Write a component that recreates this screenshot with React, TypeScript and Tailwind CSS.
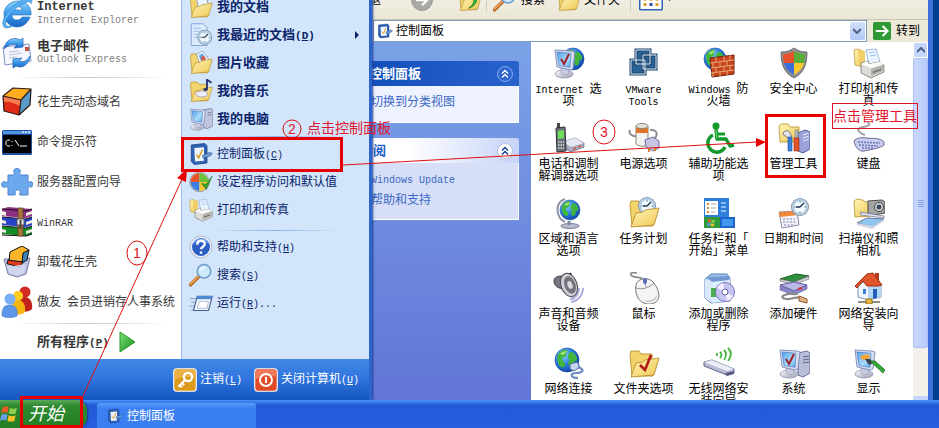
import React from 'react';

const MONO = "font-['Liberation_Mono','Noto_Sans_CJK_SC',monospace]";

// Latin runs are set in a narrower face so that they take half a CJK cell
const Mixed: React.FC<{ text: string; latin?: string }> = ({ text, latin = 'text-[10px]' }) => (
  <>
    {text.split(/([\x21-\x7e][\x20-\x7e]*)/).map((part, i) => {
      if (i % 2 === 0) return part;
      const key = part.match(/^\((\w)\)(.*)$/);
      return (
        <span key={i} className={`${MONO} ${latin}`}>
          {key ? <>(<u>{key[1]}</u>){key[2]}</> : part}
        </span>
      );
    })}
  </>
);

/* ---------- shared icon parts ---------- */

const Defs = () => (
  <svg width="0" height="0" className="absolute" aria-hidden="true">
    <defs>
      <radialGradient id="sea" cx="0.35" cy="0.3" r="0.8">
        <stop offset="0" stopColor="#8fd0ff" />
        <stop offset="0.5" stopColor="#2a7de0" />
        <stop offset="1" stopColor="#0b3c9c" />
      </radialGradient>
      <linearGradient id="screen" x1="0" y1="0" x2="1" y2="1">
        <stop offset="0" stopColor="#4f9fe8" />
        <stop offset="0.6" stopColor="#a9dcfa" />
        <stop offset="1" stopColor="#5ba6ea" />
      </linearGradient>
      <linearGradient id="folder" x1="0" y1="0" x2="1" y2="1">
        <stop offset="0" stopColor="#fff6b8" />
        <stop offset="1" stopColor="#f0c653" />
      </linearGradient>
      <linearGradient id="metal" x1="0" y1="0" x2="1" y2="1">
        <stop offset="0" stopColor="#ffffff" />
        <stop offset="1" stopColor="#9a9db4" />
      </linearGradient>
      <linearGradient id="blueGlass" x1="0" y1="0" x2="0" y2="1">
        <stop offset="0" stopColor="#8fd3fb" />
        <stop offset="0.5" stopColor="#3d9bea" />
        <stop offset="1" stopColor="#1762c4" />
      </linearGradient>
      <linearGradient id="play" x1="0" y1="0" x2="1" y2="1">
        <stop offset="0" stopColor="#7ee07a" />
        <stop offset="1" stopColor="#0d8a14" />
      </linearGradient>
    </defs>
  </svg>
);

const Icon: React.FC<{ className?: string; children: React.ReactNode }> = ({ className = 'size-8', children }) => (
  <svg viewBox="0 0 32 32" className={`${className} shrink-0`} aria-hidden="true">{children}</svg>
);

const Globe = ({ cx = 16, cy = 16, r = 12 }) => (
  <g transform={`translate(${cx} ${cy}) scale(${r / 12})`}>
    <circle r="12" fill="url(#sea)" stroke="#0d3f96" strokeWidth="0.6" />
    <path d="M-9-6c3-4 8-5 9-4s-2 3-1 5-4 2-4 4 3 2 3 5-2 4-4 3-5-7-3-13zM4-8c3 0 6 4 6 7s-2 1-3 3 0 5-3 5-3-4-2-6-2-3-1-5 1-4 3-4z" fill="#3fb53a" />
    <path d="M-7-6c3-3 6-3 7-3s-3 3-4 4z" fill="#a7e57c" />
  </g>
);

const Monitor = ({ children }: { children?: React.ReactNode }) => (
  <>
    <ellipse cx="11" cy="27" rx="9" ry="4" fill="url(#metal)" stroke="#8588a8" strokeWidth="0.7" />
    <path d="M8 20l7 1 1 5c-2 2-6 2-8 0z" fill="#c9cbe0" stroke="#8a8cab" strokeWidth="0.5" />
    <path d="M2 3l17 1 3 1-2 17-3 1L4 20z" fill="#d8dced" stroke="#6c7db0" strokeWidth="0.8" />
    <path d="M4 5l14 1.300-1 14L6 18.500z" fill="url(#screen)" stroke="#3c6fc0" strokeWidth="0.6" />
    {children}
  </>
);

const Folder = ({ children }: { children?: React.ReactNode }) => (
  <>
    <path d="M2 8l1-4h8l2 3h11l1 22H4z" fill="#f3d36c" stroke="#b8902f" strokeWidth="0.9" />
    {children}
    <path d="M3 30l5-14 7-1 2-2 14-2-5 17z" fill="url(#folder)" stroke="#b8902f" strokeWidth="0.9" />
  </>
);

const PrinterShape = () => (
  <>
    <path d="M13 3l10-1 4 13-11 3z" fill="#eaf4ff" stroke="#8fa7d2" strokeWidth="0.8" />
    <path d="M16 6l6-1M17 9l6-1" stroke="#9fc3ee" />
    <path d="M8 16l7-2 1 3 10-2 5 3v7l-13 6-10-5z" fill="#dcdcd8" stroke="#77776f" strokeWidth="0.8" />
    <path d="M8 17l10 4 13-4-5-2-10 2-2-3z" fill="#fbfbf8" />
    <path d="M18 22l12-4v6l-12 5z" fill="#b1b1ab" />
    <path d="M20 25l8-3v1l-8 3z" fill="#55554f" />
  </>
);

const PrintersShape = () => (
  <>
    <path d="M1 3l4-1 5 2v16l-8-2z" fill="url(#folder)" stroke="#b8902f" strokeWidth="0.7" />
    <path d="M5 3l7 1v14l-6 1z" fill="#f2cf66" />
    <PrinterShape />
  </>
);

const Clock = ({ cx = 19, cy = 11, r = 9 }) => (
  <g transform={`translate(${cx} ${cy}) scale(${r / 9})`}>
    <circle r="9" fill="#7e95ae" />
    <circle r="8" fill="#c5d8e8" />
    <circle r="6.500" fill="#f1fbff" stroke="#7cabca" strokeWidth="0.6" />
    <path d="M0 0l4-4M0 0h-4" stroke="#20304e" strokeWidth="1.400" />
    <path d="M0-6v1.500M0 6v-1.500M6 0h-1.500M-6 0h1.500" stroke="#5a7590" />
  </g>
);

const PanelIcon = ({ className = 'size-6' }) => (
  <Icon className={className}>
    <path d="M3 4l18-2 3 3v23l-17 2-4-4z" fill="#2f62b4" stroke="#163c7c" />
    <path d="M7 8l13-1v18L8 26z" fill="#eff6ff" />
    <path d="M10 17l3 4 5-11" fill="none" stroke="#d99a20" strokeWidth="2" />
    <path d="M18 18l9-4 4 1-2 3-10 4z" fill="#6f9bd8" stroke="#24508f" strokeWidth="0.8" />
  </Icon>
);

const Magnifier = ({ className = 'size-6' }) => (
  <Icon className={className}>
    <path d="M13 18L2 29" stroke="#b86a22" strokeWidth="5" strokeLinecap="round" />
    <path d="M12 18L2 28" stroke="#f0ae6a" strokeWidth="2" strokeLinecap="round" />
    <circle cx="20" cy="11" r="9" fill="#cdeafd" stroke="#6da0cc" strokeWidth="2.200" />
    <path d="M14 10c1-4 5-5 8-4-3 1-5 3-8 4z" fill="#fff" />
  </Icon>
);

const Flag = () => (
  <>
    <path d="M4 6c4-3 7-2 10-1l-2 9c-3-1-6-2-10 1z" fill="#ee5a26" />
    <path d="M16 6c4 2 7 2 11 0l-2 9c-4 2-7 1-11 0z" fill="#8fd04f" />
    <path d="M2 18c4-3 7-2 10-1l-2 9c-3-1-6-2-10 1z" fill="#6b9ff5" />
    <path d="M14 18c4 2 7 2 11 0l-2 9c-4 2-7 1-11 0z" fill="#fbc22c" />
  </>
);

/* ---------- start menu icons ---------- */

const IeIcon = () => (
  <Icon>
    <path d="M29 20h-8c-1 2-3 3-5 3-3 0-5-2-5-5h19c1-8-5-14-13-14S3 10 3 17s6 13 13 13c6 0 11-4 13-10zM11 13c1-2 3-4 5-4s5 2 5 4z" fill="url(#blueGlass)" stroke="#1d68bd" strokeWidth="0.6" />
    <path d="M3 30c-4-5 2-16 13-24C23 1 30-1 31 3c0 2-1 3-1 4 0-3-4-3-10 1C10 14 3 24 5 28c1 2 5 1 8 0-4 3-8 4-10 2z" fill="#55b0f3" stroke="#2474c8" strokeWidth="0.5" />
  </Icon>
);

const MailIcon = () => (
  <Icon>
    <path d="M2 10l26-3 2 17-26 4z" fill="#f4f7ff" stroke="#7e93c2" />
    <path d="M8 15l10-1M8 18l13-2M8 21l8-1" stroke="#b7bfd6" />
    <path d="M24 10h4v4h-4z" fill="#c5523e" />
    <path d="M3 12C4 3 13-1 19 3l3-2v9l-9 1 3-3c-4-2-9 0-13 4z" fill="url(#blueGlass)" stroke="#1b5cae" strokeWidth="0.7" />
    <path d="M29 19c-1 9-8 13-14 10l-3 2v-9l9-1-3 3c4 2 8 0 11-5z" fill="url(#blueGlass)" stroke="#1b5cae" strokeWidth="0.7" />
  </Icon>
);

const CubeIcon = () => (
  <Icon>
    <path d="M2 10l18 4-2 15L3 25z" fill="#e02b16" />
    <path d="M2 10l18 4-1 6C13 17 8 15 3 16z" fill="#f77a51" />
    <path d="M2 10L12 2l18 1-10 11z" fill="#ffac1f" />
    <path d="M20 14L30 3l-1 16-11 10z" fill="#5a9bc9" />
    <path d="M2 10l18 4-2 15L3 25zM2 10L12 2l18 1-10 11M30 3l-1 16-11 10" fill="none" stroke="#2a1a14" strokeWidth="1.200" strokeLinejoin="round" />
  </Icon>
);

const CmdIcon = () => (
  <Icon>
    <rect x="1" y="4" width="30" height="25" rx="1.500" fill="#1d4f9e" />
    <rect x="2" y="5" width="28" height="3" fill="#4f95e4" />
    <path d="M21 6h2M24 6h2M27 6h2" stroke="#dcecff" strokeWidth="1.500" />
    <rect x="2" y="9" width="28" height="18" fill="#000" />
    <path d="M9 14H6.500L5 15.500v3L6.500 20H9M11 15v1M11 19v1M14 14l4 6M19 20h7" fill="none" stroke="#fff" />
  </Icon>
);

const PuzzleIcon = () => (
  <Icon>
    <path d="M7 9h6c1-2-1-3 0-5s5-2 6 0-1 3 0 5h8v7c1 1 2-1 4 0s1 5-1 5-2-1-3 0v8h-8c-1-2 1-2 0-4s-5-1-5 1 1 2 0 3H7v-8c-2-1-3 1-5 0s-2-4 0-5 3 1 5 0z" fill="#6da7ee" stroke="#4d86cf" />
  </Icon>
);

const RarIcon = () => (
  <Icon>
    <path d="M1 3l6-2 24 2v7l-6 2-24-2z" fill="#8d3187" />
    <path d="M1 11l24 2 6-2v8l-6 2-24-2z" fill="#2643c8" />
    <path d="M1 20l24 2 6-2v8l-6 2-24-2z" fill="#168a28" />
    <path d="M1 5l4 1v4l-4-1zM1 14l4 1v3l-4-1zM1 23l4 1v3l-4-1zM25 7l6-2v3l-6 2zM25 16l6-2v3l-6 2zM25 25l6-2v3l-6 2z" fill="#f2ecdc" />
    <path d="M1 3l24 2 6-2M1 11l24 2 6-2M1 20l24 2 6-2M1 29l24 1 6-2" fill="none" stroke="#1b0f1a" strokeWidth="1.200" />
    <path d="M17 2h5v28h-5z" fill="#a8753c" stroke="#51361a" strokeWidth="0.7" />
    <path d="M16 13h7v6h-7z" fill="#eee" stroke="#555" />
    <path d="M19.500 14v9" stroke="#444" strokeWidth="2" />
  </Icon>
);

const UninstallIcon = () => (
  <Icon>
    <path d="M3 13l26-1-4 16-9 3-9-3z" fill="#b7bfdf" stroke="#7b83ad" />
    <path d="M9 6l12-6 7 4-6 12-14-1z" fill="#ffb52a" stroke="#111" />
    <path d="M22 7l6-3-2 10-5 3z" fill="#3f83b9" stroke="#111" />
    <path d="M7 14l15 2-3 5-13-3z" fill="#e23a1c" stroke="#111" />
    <path d="M5 18l7 2 13-2-2 9-7 3-8-3z" fill="#d3d8ee" opacity="0.900" />
  </Icon>
);

const PeopleIcon = () => (
  <Icon>
    <circle cx="24" cy="6" r="5.500" fill="#d22c22" />
    <path d="M18 24c-1-9 1-13 6-13s8 5 7 12c-3 3-9 4-13 1z" fill="#c2231b" />
    <circle cx="17" cy="10" r="5" fill="#ffcb1f" />
    <path d="M11 27c-1-9 1-13 6-13s8 5 7 12c-3 3-9 4-13 1z" fill="#f5b60d" />
    <circle cx="9" cy="13" r="5.500" fill="#77aef5" />
    <path d="M1 30c0-8 2-11 8-11s8 5 7 11c-4 2-11 2-15 0z" fill="#5d97ea" stroke="#3f78cc" strokeWidth="0.6" />
  </Icon>
);

const DocsIcon = () => <Icon className="size-6"><Folder><path d="M10 5l12-3 5 13-14 5z" fill="#e8f4ff" stroke="#88a" /></Folder></Icon>;
const RecentIcon = () => (
  <Icon className="size-6">
    <path d="M3 1h16l5 5v24H3z" fill="#dcebff" stroke="#6f8fc4" />
    <path d="M6 7h10M6 11h8M6 15h6M6 19h6" stroke="#8eabdc" />
    <Clock cx={21} cy={19} r={10} />
  </Icon>
);
const PicturesIcon = () => (
  <Icon className="size-6">
    <Folder>
      <path d="M10 5l8-5 9 12-12 6z" fill="#fff" stroke="#7d8db8" />
      <path d="M13 6l5-3 5 8-7 3z" fill="#58a8e8" />
      <circle cx="19" cy="10" r="3" fill="#e05a3a" />
    </Folder>
  </Icon>
);
const MusicIcon = () => (
  <Icon className="size-6">
    <Folder />
    <ellipse cx="17" cy="20" rx="8" ry="4" fill="#eef" stroke="#99a" />
    <path d="M24 14V1l6 4" fill="none" stroke="#27336e" strokeWidth="2.500" />
    <ellipse cx="22" cy="14" rx="3" ry="2" fill="#27336e" />
  </Icon>
);
const ComputerIcon = () => (
  <Icon className="size-6">
    <path d="M19 4l10-2 3 2v21l-8 4-5-2z" fill="#c0c5de" stroke="#6f769e" />
    <path d="M25 8l5-1M25 11l5-1" stroke="#5c6590" />
    <Monitor />
  </Icon>
);
const DefaultsIcon = () => (
  <Icon className="size-6">
    <circle cx="14" cy="16" r="13" fill="#d8d8d8" stroke="#888" />
    <path d="M14 16V4A12 12 0 0 0 2 16z" fill="#e8532c" />
    <path d="M14 16V4a12 12 0 0 1 12 12z" fill="#6cc13a" />
    <path d="M14 16H2a12 12 0 0 0 12 12z" fill="#3c7fe0" />
    <path d="M14 16h12a12 12 0 0 1-12 12z" fill="#f7c52f" />
    <path d="M17 18l6 8 8-18-8 11z" fill="#36a52e" stroke="#1a711b" strokeWidth="0.700" />
  </Icon>
);
const HelpIcon = () => (
  <Icon className="size-6">
    <circle cx="16" cy="16" r="14.500" fill="#f4f6fb" stroke="#98a2bc" />
    <circle cx="16" cy="16" r="12" fill="#2c5ec4" />
    <path d="M5 12a12 12 0 0 1 22 0c-6-4-16-4-22 0z" fill="#6f9cec" />
    <path d="M11 13c0-7 10-7 10-1 0 4-5 4-5 7M16 22v3" fill="none" stroke="#fff" strokeWidth="3.200" />
  </Icon>
);
const RunIcon = () => (
  <Icon className="size-6">
    <path d="M1 10h11M3 15h9M0 20h10M3 25h9" stroke="#8ea5cd" strokeWidth="1.500" />
    <path d="M11 7h20l-5 19H6z" fill="#f3f7ff" stroke="#4a5f8f" strokeWidth="1.500" />
    <path d="M11 7h20l-1 4H10z" fill="#4c88d8" />
    <path d="M14 14h12l-2 9H11z" fill="#fff" stroke="#9aa8c8" />
  </Icon>
);

const LogoffIcon = () => (
  <Icon className="size-6">
    <rect x="1" y="1" width="30" height="30" rx="4" fill="#dc9a1c" stroke="#fff" strokeWidth="1.500" />
    <path d="M2 5q0-3 3-3h22q3 0 3 3v9Q16 9 2 16z" fill="#e9b34a" />
    <circle cx="20" cy="12" r="5.500" fill="none" stroke="#fff" strokeWidth="3" />
    <path d="M16 16L7 25M9 23l3 3M12 20l3 3" stroke="#fff" strokeWidth="2.600" />
  </Icon>
);
const ShutdownIcon = () => (
  <Icon className="size-6">
    <rect x="1" y="1" width="30" height="30" rx="4" fill="#e04a26" stroke="#fff" strokeWidth="1.500" />
    <path d="M2 5q0-3 3-3h22q3 0 3 3v7Q16 8 2 15z" fill="#ee7a5b" />
    <circle cx="16" cy="16" r="8" fill="none" stroke="#fff" strokeWidth="2.600" />
    <path d="M16 12v8" stroke="#fff" strokeWidth="2.800" />
  </Icon>
);

/* ---------- control panel items ---------- */

const items: { label: string; icon: React.ReactNode }[] = [
  {
    label: 'Internet 选\n项',
    icon: <><Globe cx={20} cy={12} r={11} /><Monitor><path d="M8 12l3 5 5-10" fill="none" stroke="#a01f28" strokeWidth="2" /></Monitor></>,
  },
  {
    label: 'VMware\nTools',
    icon: (
      <>
        <g fill="#2b6296" stroke="#1b446e" strokeWidth="3">
          <path d="M8 3h14v14H8zM3 13h14v14H3zM15 8h13v14H15z" />
        </g>
        <g fill="none" stroke="#e4eff9">
          <path d="M8 3h14v14H8zM3 13h14v14H3zM15 8h13v14H15z" />
        </g>
      </>
    ),
  },
  {
    label: 'Windows 防\n火墙',
    icon: (
      <>
        <Globe cx={12} cy={12} r={11} />
        <path d="M7 11l24-3v19L9 30z" fill="#c8441b" stroke="#6d210b" />
        <path d="M7 16l24-3M8 21l23-3M8 26l23-3M13 10v5M21 9v5M27 8v5M10 16v5M17 15v5M24 14v5M13 20v5M21 19v5M27 18v5M10 26v4M17 25v4M24 24v4" stroke="#eeb085" strokeWidth="0.900" />
      </>
    ),
  },
  {
    label: '安全中心',
    icon: (
      <>
        <path d="M16 1c4 3 8 4 13 4 0 12-3 21-13 26C6 26 3 17 3 5c5 0 9-1 13-4z" fill="#8f9096" stroke="#555" strokeWidth="0.800" />
        <path d="M16 4v12H6C5 13 5 10 5 7c4 0 8-1 11-3z" fill="#e8512a" />
        <path d="M16 4v12h10c1-3 1-6 1-9-4 0-8-1-11-3z" fill="#57ad35" />
        <path d="M6 16h10v12C11 25 7 21 6 16z" fill="#3b6fd9" />
        <path d="M26 16H16v12c5-3 9-7 10-12z" fill="#f9c92c" />
      </>
    ),
  },
  { label: '打印机和传\n真', icon: <PrintersShape /> },
  {
    label: '电话和调制\n解调器选项',
    icon: (
      <>
        <path d="M10 20l12-4 9 5v4l-13 5-9-5z" fill="#a8acc8" stroke="#5a5e80" strokeWidth="0.700" />
        <path d="M10 20l12-4 9 5-13 4z" fill="#e6e8f4" />
        <path d="M20 27l3-1M25 25l3-1" stroke="#e0562c" strokeWidth="1.500" />
        <path d="M4 1h3v6H4z" fill="#444" />
        <path d="M3 6l9-1 1 24-9 1z" fill="#6b7178" stroke="#2d3238" />
        <path d="M5 9l6-1v8l-6 1z" fill="#6fe05a" />
        <path d="M5 20h6M5 23h6M5 26h6" stroke="#d6dae0" strokeDasharray="1.500 1" strokeWidth="1.500" />
      </>
    ),
  },
  {
    label: '电源选项',
    icon: (
      <>
        <path d="M2 8c-2 4 3 7 8 6M22 8c8-1 8 6 4 9" fill="none" stroke="#8e8e99" strokeWidth="2" />
        <path d="M8 4v18c3 3 10 3 12 0V4z" fill="#f4f2ee" stroke="#8b8579" />
        <path d="M8 6h12v5H8z" fill="#e0722c" />
        <ellipse cx="14" cy="4" rx="6" ry="2.500" fill="#e5e3dc" stroke="#8b8579" />
        <path d="M17 18l8-3 6 4v7l-6 3-7-4z" fill="#c6c5e6" stroke="#6d6ba5" />
        <path d="M21 26v4M27 25v4" stroke="#d3862f" strokeWidth="2" />
      </>
    ),
  },
  {
    label: '辅助功能选\n项',
    icon: (
      <>
        <circle cx="13" cy="4" r="3.500" fill="#149a2b" />
        <path d="M13 7l1 10h9l4 7 4-1" fill="none" stroke="#149a2b" strokeWidth="3.500" strokeLinejoin="round" />
        <path d="M14 12h8" stroke="#149a2b" strokeWidth="3" />
        <path d="M10 13a9 9 0 1 0 12 12" fill="none" stroke="#149a2b" strokeWidth="3.500" />
        <path d="M13 8l1 8" stroke="#6fdc70" />
      </>
    ),
  },
  {
    label: '管理工具',
    icon: (
      <>
        <path d="M1 4l2-2h7l2 3h9v15H2z" fill="url(#folder)" stroke="#b8902f" strokeWidth="0.800" />
        <path d="M20 11l7-3 5 2v17l-7 4-5-2z" fill="#9ba3d8" stroke="#555d9b" />
        <path d="M25 13l6-2M25 16l6-2M25 19l6-2" stroke="#e7eaff" />
        <path d="M5 11c2-3 6-3 7 0l2 4-3 2-3-3c-2 0-3-1-3-3z" fill="#e4e4ea" stroke="#777" />
        <path d="M10 15h4v14h-4z" fill="#3a82d8" stroke="#1e4f9a" strokeWidth="0.600" />
        <path d="M17 8h3v8h-3z" fill="#b4b4ba" stroke="#777" strokeWidth="0.500" />
        <path d="M16 16h5v13h-5z" fill="#e2552a" stroke="#8d2a10" strokeWidth="0.600" />
      </>
    ),
  },
  {
    label: '键盘',
    icon: (
      <>
        <path d="M12 13c-8-3-9-7-2-8s8-3 4-5" fill="none" stroke="#a4a4a8" strokeWidth="2" />
        <path d="M1 19c2-3 8-4 13-3s12-1 17 4v3c-3 3-15 5-20 6s-9-4-10-10z" fill="#c9cdf0" stroke="#666a94" />
        <path d="M5 20l22 1M6 23l19 1M9 26l11 0" stroke="#6c73b3" strokeDasharray="2 1" strokeWidth="1.500" />
      </>
    ),
  },
  {
    label: '区域和语言\n选项',
    icon: (
      <>
        <ellipse cx="17" cy="29" rx="9" ry="2.500" fill="#b9bccd" stroke="#777b92" />
        <path d="M16 24v4" stroke="#84889e" strokeWidth="3" />
        <path d="M12 2C2 5 2 20 12 25" fill="none" stroke="#8f94ab" strokeWidth="2" />
        <Globe cx={17} cy={13} r={10} />
      </>
    ),
  },
  { label: '任务计划', icon: <Folder><Clock cx={19} cy={9} r={9} /></Folder> },
  {
    label: '任务栏和「\n开始」菜单',
    icon: (
      <>
        <path d="M1 1h25v20H1z" fill="#2c7fd8" />
        <path d="M2 4h13v14H2z" fill="#fff" />
        <path d="M4 7h2M4 11h2M4 15h2" stroke="#e08434" strokeWidth="2" />
        <path d="M8 7h5M8 11h5M8 15h4" stroke="#9aa" />
        <path d="M18 6h5M18 10h5M18 14h5" stroke="#a7d4fb" strokeWidth="1.500" />
        <path d="M1 20h16v11H1z" fill="#2f9a3c" />
        <path d="M17 20h15v11H17z" fill="#1f63cf" />
        <g transform="translate(4 21) scale(0.300)"><Flag /></g>
        <path d="M19 22h11v7H19z" fill="#3f97ec" />
      </>
    ),
  },
  {
    label: '日期和时间',
    icon: (
      <>
        <path d="M1 15l18-1 2 14-17 3z" fill="#f5f5fb" stroke="#8c8ca4" />
        <path d="M1 15l18-1 1 4-18 2z" fill="#f0873a" />
        <path d="M5 22h12M5 25h13M6 28h11" stroke="#9fa4c4" strokeDasharray="2 1.500" strokeWidth="1.500" />
        <Clock cx={22} cy={10} r={9} />
      </>
    ),
  },
  {
    label: '扫描仪和照\n相机',
    icon: (
      <>
        <path d="M1 4l3-2 6 1 2 2h6v14L2 20z" fill="url(#folder)" stroke="#b8902f" strokeWidth="0.800" />
        <path d="M15 4l14-1 3 2v11l-12 2-5-2z" fill="#a5a5a5" stroke="#4c4c4c" />
        <circle cx="26" cy="10" r="4.500" fill="#ddd" stroke="#444" />
        <circle cx="26" cy="10" r="2.500" fill="#3c4660" />
        <path d="M7 15l24 4v2L8 18z" fill="#dfe5f4" stroke="#6a7390" strokeWidth="0.700" />
        <path d="M4 26l10-5 17 1-11 8z" fill="#8ec7ef" stroke="#6a7390" />
        <path d="M4 26v2l15 4 12-8v-2l-11 7z" fill="#cfd4e6" />
      </>
    ),
  },
  {
    label: '声音和音频\n设备',
    icon: (
      <>
        <path d="M17 27c5 0 9-5 9-11M18 30c7-1 12-7 12-14" fill="none" stroke="#b1b0dd" strokeWidth="2" />
        <path d="M1 9c0-4 4-5 8-5l9-3 3 18-9-2c-6 0-11-3-11-8z" fill="#767680" stroke="#3d3d45" />
        <ellipse cx="16" cy="13" rx="8" ry="12" transform="rotate(-20 16 13)" fill="#cfcfd6" stroke="#4b4b52" />
        <ellipse cx="17" cy="13" rx="5.500" ry="9" transform="rotate(-20 17 13)" fill="#73737c" />
        <ellipse cx="17" cy="13" rx="2.500" ry="4" transform="rotate(-20 17 13)" fill="#d8d8de" />
      </>
    ),
  },
  {
    label: '鼠标',
    icon: (
      <>
        <path d="M16 9C14 3 8 7 4 4S5 0 9 1" fill="none" stroke="#8a8a8e" strokeWidth="1.600" />
        <path d="M8 13c1-7 13-9 18-2s7 15 2 19-15 2-18-4c-2-4-3-8-2-13z" fill="#f4f4f4" stroke="#77777b" />
        <path d="M8 16c6 2 13 0 18-5M16 7l2 8" fill="none" stroke="#909096" />
        <ellipse cx="17" cy="9" rx="2" ry="3" fill="#5b6cb8" />
        <path d="M13 27c6 4 14 1 16-4 0 6-9 10-16 4z" fill="#bcbcc4" />
      </>
    ),
  },
  {
    label: '添加或删除\n程序',
    icon: (
      <>
        <path d="M2 7l6-5h16l3 4v23l-19 2-6-5z" fill="#9cc6ef" stroke="#567fb8" />
        <path d="M2 7l7 2v22l-7-5z" fill="#d9e9fa" />
        <path d="M9 9l18-2v22L9 31z" fill="#dcefff" />
        <path d="M4 5l22-1v4L9 10z" fill="#7398d4" />
        <path d="M8 16h5v9H8z" fill="#4aae4a" />
        <circle cx="22" cy="20" r="9.500" fill="#c4c4f1" stroke="#7776ba" />
        <path d="M22 20l-8-4a9 9 0 0 1 6-5zM22 20l8 4a9 9 0 0 1-6 5z" fill="#f3edff" />
        <circle cx="22" cy="20" r="3" fill="#fff" stroke="#6666aa" />
      </>
    ),
  },
  {
    label: '添加硬件',
    icon: (
      <>
        <path d="M2 7L18 2l13 2-15 6z" fill="#2f8f3c" stroke="#1b5a24" />
        <path d="M2 7l14 3 15-6v3l-15 6-14-4z" fill="#c9cbd0" stroke="#666" strokeWidth="0.500" />
        <path d="M2 13l14-3 13 3-13 6z" fill="#b9b8e6" stroke="#5f5c9e" />
        <path d="M2 14l14 5 13-6v4l-13 6-14-5z" fill="#8987c7" stroke="#5f5c9e" strokeWidth="0.600" />
        <path d="M20 17l4-1" stroke="#d33" strokeWidth="2" />
        <path d="M20 22c-14-2-20 4-12 5s12-5 16 1" fill="none" stroke="#8a8a8e" strokeWidth="2.200" />
        <path d="M21 24l8 3v4l-8-2z" fill="#e2b48a" stroke="#8e5427" />
      </>
    ),
  },
  {
    label: '网络安装向\n导',
    icon: (
      <>
        <path d="M22 1h4v9h-4z" fill="#b33e22" />
        <path d="M5 14l9-7 14 7v11l-13 3-10-3z" fill="#f1f5ff" stroke="#8090b5" />
        <path d="M15 15l13-2v12l-13 3z" fill="#b3d5f6" />
        <path d="M2 14L14 2l6-1 9 12-4 1H14L10 9l-6 7z" fill="#e0552b" stroke="#9a2c10" />
        <path d="M20 17h4v9l-4 1z" fill="#2460b8" />
        <path d="M10 17h3v5h-3z" fill="#3c7fd4" />
        <path d="M5 30h22" stroke="#8a8f80" strokeWidth="2" />
        <path d="M13 27h6v5h-6z" fill="#e8b93b" stroke="#94701a" />
      </>
    ),
  },
  {
    label: '网络连接',
    icon: (
      <>
        <Globe cx={14} cy={13} r={12} />
        <path d="M17 17l7-2 3 5-6 4-4-2z" fill="#c6d5ef" stroke="#4b68a5" />
        <path d="M25 20c8 3 4 6-2 6s-6 5 2 5" fill="none" stroke="#6f8cc2" strokeWidth="2.200" />
      </>
    ),
  },
  { label: '文件夹选项', icon: <><Folder /><path d="M12 18l5 5 6-15" fill="none" stroke="#b31919" strokeWidth="2.600" /></> },
  {
    label: '无线网络安\n装向导',
    icon: (
      <>
        <path d="M17 11c2-2 2-4 0-6M21 13c3-4 3-7 0-10M25 14c4-5 4-9 0-13M14 9v-3" fill="none" stroke="#46b83c" strokeWidth="1.800" />
        <path d="M1 15l8-2 22 9v4l-7 2-23-9z" fill="#b9bcd6" stroke="#5f6388" />
        <path d="M1 15l8-2 22 9-7 2z" fill="#eceef8" />
        <path d="M22 26l9-2v3l-7 2z" fill="#565b86" />
      </>
    ),
  },
  {
    label: '系统',
    icon: (
      <>
        <path d="M20 6l9-2 3 2v20l-7 4-5-2z" fill="#b9bdd8" stroke="#696f96" />
        <path d="M25 10l6-1M25 13l6-1M25 16l6-1" stroke="#5c6290" />
        <Monitor><path d="M8 12l3 5 5-10" fill="none" stroke="#a01f28" strokeWidth="2" /></Monitor>
      </>
    ),
  },
  {
    label: '显示',
    icon: (
      <Monitor>
        <path d="M7 10c3-4 9-3 10-1s-5 5-7 4z" fill="#f0a53a" />
        <path d="M12 12l5 0 3 4-4 2z" fill="#3d3a52" />
        <path d="M17 14l5 0 10 9-2 3z" fill="#36a836" stroke="#176a1c" strokeWidth="0.800" />
      </Monitor>
    ),
  },
];

/* ---------- start menu ---------- */

const pinned = [
  { icon: <IeIcon />, title: 'Internet', sub: 'Internet Explorer' },
  { icon: <MailIcon />, title: '电子邮件', sub: 'Outlook Express' },
];

const recent = [
  { icon: <CubeIcon />, title: '花生壳动态域名' },
  { icon: <CmdIcon />, title: '命令提示符' },
  { icon: <PuzzleIcon />, title: '服务器配置向导' },
  { icon: <RarIcon />, title: 'WinRAR' },
  { icon: <UninstallIcon />, title: '卸载花生壳' },
  { icon: <PeopleIcon />, title: '傲友\u2002会员进销存人事系统' },
];

const places = [
  { icon: <DocsIcon />, title: '我的文档' },
  { icon: <RecentIcon />, title: '我最近的文档(D)', more: true },
  { icon: <PicturesIcon />, title: '图片收藏' },
  { icon: <MusicIcon />, title: '我的音乐' },
  { icon: <ComputerIcon />, title: '我的电脑' },
];

const settings = [
  { icon: <PanelIcon />, title: '控制面板(C)' },
  { icon: <DefaultsIcon />, title: '设定程序访问和默认值' },
  { icon: <Icon className="size-6"><PrintersShape /></Icon>, title: '打印机和传真' },
];

const tools = [
  { icon: <HelpIcon />, title: '帮助和支持(H)' },
  { icon: <Magnifier />, title: '搜索(S)' },
  { icon: <RunIcon />, title: '运行(R)...' },
];

const MenuRow: React.FC<{ icon: React.ReactNode; title: string; bold?: boolean; more?: boolean }> = ({ icon, title, bold, more }) => (
  <button className={`flex h-7 w-full items-center gap-1 pl-[7px] pr-2.5 text-left text-[#0a246a] ${bold ? 'text-[13px] font-bold' : 'text-xs'}`}>
    {icon}
    <span className="flex-1"><Mixed text={title} latin={bold ? 'text-[11px]' : 'text-[10px]'} /></span>
    {more && (
      <svg viewBox="0 0 4 8" className="h-2 w-1" aria-hidden="true"><path d="M0 0l4 4-4 4z" fill="#0a246a" /></svg>
    )}
  </button>
);

const StartMenu = () => (
  <nav className="absolute bottom-0 left-0 z-10 w-[372px] border-r-[3px] border-[#2c66cc] shadow-[1px_0_2px_#1c3f8f]">
    <div className="flex">
      <div className="w-[181px] bg-white text-[#373738]">
        {pinned.map((p) => (
          <button key={p.title} className="flex h-10 w-full items-center gap-1 pl-px text-left">
            {p.icon}
            <span className="flex flex-col">
              <b className="text-[13px] leading-3"><Mixed text={p.title} latin="text-[12px]" /></b>
              <span className="text-xs leading-3 text-[#808080]"><Mixed text={p.sub} /></span>
            </span>
          </button>
        ))}
        <hr className="mx-3 my-[4px] h-px border-0 bg-gradient-to-r from-white via-[#c8c8c8] to-white" />
        {recent.map((p) => (
          <button key={p.title} className="flex h-10 w-full items-center gap-1 whitespace-nowrap pl-px text-left text-xs">
            {p.icon}
            <span><Mixed text={p.title} /></span>
          </button>
        ))}
        <hr className="mx-3 mt-px h-px border-0 bg-gradient-to-r from-white via-[#c8c8c8] to-white" />
        <button className="flex h-[35px] w-full items-center gap-2.5 pl-[37px] text-left text-[13px] font-bold">
          <span><Mixed text="所有程序(P)" latin="text-[11px]" /></span>
          <svg viewBox="0 0 17 22" className="h-[22px] w-[17px]" aria-hidden="true">
            <path d="M1 1l15 10L1 21z" fill="url(#play)" stroke="#2c9a2c" />
          </svg>
        </button>
      </div>
      <div className="flex-1 border-l border-[#95bdee] bg-[#d3e5fa]">
        {places.map((p) => <MenuRow key={p.title} bold {...p} />)}
        <hr className="mx-7 my-[3px] h-px border-0 bg-gradient-to-r from-[#d3e5fa] via-[#88b4e4] to-[#d3e5fa]" />
        {settings.map((p) => <MenuRow key={p.title} {...p} />)}
        <hr className="mx-7 mb-[2px] mt-[6px] h-px border-0 bg-gradient-to-r from-[#d3e5fa] via-[#88b4e4] to-[#d3e5fa]" />
        {tools.map((p) => <MenuRow key={p.title} {...p} />)}
      </div>
    </div>
    <div className="flex h-[41px] items-center justify-end gap-3 bg-gradient-to-b from-[#4088e6] via-[#2f74dc] to-[#0f55bd] pr-2.5 text-xs text-white">
      <button className="flex items-center gap-[3px]"><LogoffIcon /><span><Mixed text="注销(L)" /></span></button>
      <button className="flex items-center gap-[3px]"><ShutdownIcon /><span><Mixed text="关闭计算机(U)" /></span></button>
    </div>
  </nav>
);

/* ---------- control panel window ---------- */

const Chevrons: React.FC<{ light?: boolean }> = ({ light }) => (
  <svg viewBox="0 0 18 18" className="size-[18px]" aria-hidden="true">
    <circle cx="9" cy="9" r="7.500" fill={light ? '#fff' : '#2f66cf'} stroke={light ? '#b4bfe0' : '#86aaf0'} />
    <path d="M6 8.500l3-3 3 3M6 12.500l3-3 3 3" fill="none" stroke={light ? '#0c3a9c' : '#fff'} strokeWidth="1.400" />
  </svg>
);

const SidePanel = () => (
  <aside className="flex w-[209px] shrink-0 flex-col gap-[15px] bg-gradient-to-b from-[#7ba2e7] to-[#6375d6] px-3 pt-[19px] text-xs">
    <section>
      <h2 className="flex h-[25px] items-center justify-between rounded-t-[3px] bg-gradient-to-r from-[#0a4bb8] to-[#2a62cc] pl-[35px] pr-[5px] text-[13px] font-bold text-white">
        控制面板
        <button aria-label="收起控制面板"><Chevrons /></button>
      </h2>
      <div className="flex h-[37px] items-start border border-t-0 border-white bg-[#eff3ff] pl-9 pt-[7px]">
        <a href="#category" className="leading-[18px] text-[#3a68c4]">切换到分类视图</a>
      </div>
    </section>
    <section>
      <h2 className="flex h-[25px] items-center justify-between rounded-t-[3px] bg-gradient-to-r from-white from-40% to-[#c6d3f7] pr-[5px] text-[13px] font-bold text-[#215dc6]">
        另请参阅
        <button aria-label="收起另请参阅"><Chevrons light /></button>
      </h2>
      <div className="flex h-[57px] flex-col gap-px border border-t-0 border-white bg-[#d6dff7] pl-9 pt-[7px] leading-[18px] text-[#3a68c4]">
        <a href="#update"><Mixed text="Windows Update" /></a>
        <a href="#help">帮助和支持</a>
      </div>
    </section>
  </aside>
);

const ControlPanel = () => (
  <div className="ml-[322px] flex min-w-0 flex-1 flex-col border-r-[5px] border-[#3f6fd8] bg-white">
    <div className="-mt-5 flex h-10 shrink-0 items-center border-b border-[#c9c5b2] bg-gradient-to-b from-[#f6f4ec] to-[#ebe7d6] pl-[35px] text-xs">
      <button className="pr-[29px]">后退</button>
      <button aria-label="前进" className="pr-6">
        <Icon className="size-6">
          <circle cx="16" cy="16" r="14" fill="#a9a9a5" stroke="#8b8b86" />
          <path d="M8 16h14M16 9l7 7-7 7" fill="none" stroke="#fff" strokeWidth="3" />
        </Icon>
      </button>
      <button aria-label="向上" className="border-r border-[#d0ccba] pr-1">
        <Icon className="size-6"><Folder /><path d="M14 27c6-4 8-9 7-14h-4l6-7 6 7h-4c1 7-4 12-11 14z" fill="#3eb53a" stroke="#1d7c20" /></Icon>
      </button>
      <button className="flex items-center gap-1 pl-1.5 pr-3"><Magnifier />搜索</button>
      <button className="flex items-center gap-[3px] border-r border-[#d0ccba] pr-2.5"><Icon className="size-6"><Folder /></Icon>文件夹</button>
      <button aria-label="查看" className="flex items-center gap-1 pl-2">
        <Icon className="size-6">
          <rect x="1" y="2" width="30" height="27" rx="1" fill="#fff" stroke="#2f62b4" strokeWidth="2" />
          <path d="M1 2h30v6H1z" fill="#3d79d8" />
          <path d="M6 15h4M14 15h4M22 15h4M6 22h4M22 22h4" stroke="#e0a030" strokeWidth="4" />
          <path d="M14 22h4" stroke="#2c4fa0" strokeWidth="4" />
        </Icon>
        <svg viewBox="0 0 5 3" className="h-[3px] w-[5px]" aria-hidden="true"><path d="M0 0h5L2.500 3z" fill="#000" /></svg>
      </button>
    </div>
    <div className="flex h-[22px] shrink-0 items-stretch bg-[#ece9d8] pl-[51px] text-xs">
      <div className="flex flex-1 items-center border border-[#7f9db9] bg-white pl-[3px]">
        <PanelIcon className="size-4" />
        <input aria-label="地址" defaultValue="控制面板" className="ml-[3px] min-w-0 flex-1 outline-none" />
        <button aria-label="显示地址列表" className="mr-px flex h-[18px] w-[15px] items-center justify-center rounded-[2px] bg-gradient-to-b from-[#d3e0fc] to-[#b3c8f6]">
          <svg viewBox="0 0 8 6" className="h-1.5 w-2" aria-hidden="true"><path d="M0 1l4 4 4-4" fill="none" stroke="#4d6185" strokeWidth="2" /></svg>
        </button>
      </div>
      <button className="flex items-center gap-[5px] pl-1.5 pr-2">
        <Icon className="size-[18px]">
          <rect width="32" height="32" rx="3" fill="#2f9a35" />
          <path d="M5 16h20M17 7l9 9-9 9" fill="none" stroke="#fff" strokeWidth="3.500" />
        </Icon>
        转到
      </button>
    </div>
    <div className="flex min-h-0 flex-1">
      <SidePanel />
      <div className="flex min-w-0 flex-1 flex-wrap content-start overflow-hidden pt-[5px]">
        {items.map((item) => (
          <button key={item.label} className="flex h-[75px] w-[75px] flex-col items-center gap-1 text-xs leading-3 text-black">
            <Icon>{item.icon}</Icon>
            <span className="whitespace-pre text-center">
              {item.label.split('\n').map((line) => <span key={line} className="block h-3"><Mixed text={line} /></span>)}
            </span>
          </button>
        ))}
      </div>
      <div className="flex w-[15px] shrink-0 flex-col items-stretch bg-[#f3f1ea]">
        <button aria-label="向上滚动" className="flex h-4 items-center justify-center rounded-[2px] border border-white bg-[#c6d5fc]">
          <svg viewBox="0 0 8 6" className="h-1.5 w-2" aria-hidden="true"><path d="M0 5l4-4 4 4" fill="none" stroke="#4d6185" strokeWidth="2" /></svg>
        </button>
        <div className="flex flex-[6] flex-col items-center justify-center gap-px rounded-[2px] border border-[#a9bff5] bg-gradient-to-r from-[#c9d7fd] to-[#b8cbf9]">
          {[0, 1, 2, 3].map((n) => <i key={n} className="h-px w-1.5 bg-[#8ca5e8]" />)}
        </div>
        <div className="flex-1" />
        <button aria-label="向下滚动" className="h-1 rounded-t-[2px] bg-[#c6d5fc]" />
      </div>
    </div>
  </div>
);

/* ---------- taskbar ---------- */

const Taskbar = () => (
  <footer className="flex h-7 shrink-0 items-stretch bg-gradient-to-b from-[#4a92f5] via-[#2259d8] via-20% to-[#265fdf]">
    <button className="flex w-[87px] items-center gap-2 rounded-r-[10px] bg-gradient-to-b from-[#5aa95a] via-[#2f8a2f] via-20% to-[#237f23] text-lg italic text-white shadow-[1px_0_2px_#123a8c]">
      <Icon className="size-5"><Flag /></Icon>
      开始
    </button>
    <button className="ml-2.5 mt-[3px] flex w-[159px] items-center gap-1 rounded-t-[3px] bg-gradient-to-b from-[#5b9bfa] via-[#3b80f2] via-20% to-[#3b80f2] pl-2.5 text-xs text-white">
      <PanelIcon className="size-4" />
      控制面板
    </button>
  </footer>
);

/* ---------- tutorial marks over the desktop ---------- */

const Marks = () => (
  <div className="pointer-events-none absolute inset-0 z-20 text-sm text-[#e0142c]">
    <svg width="939" height="428" className="absolute left-0 top-0" fill="none" stroke="#e01010" aria-hidden="true">
      <path d="M83 396L182 179M343 165L757 142" />
      <path d="M187 169l-1 13-9-4zM766 142l-10 5v-9z" fill="#e80000" stroke="none" />
      <ellipse cx="137" cy="253" rx="10" ry="12" />
      <circle cx="292" cy="129" r="9" />
      <ellipse cx="604" cy="132" rx="11" ry="12" />
    </svg>
    <span className="absolute left-[127px] top-[243px] w-5 text-center leading-5">1</span>
    <span className="absolute left-[282px] top-[119px] w-5 text-center leading-5">2</span>
    <span className="absolute left-[594px] top-[122px] w-5 text-center leading-5">3</span>
    <span className="absolute left-[307px] top-[118px] leading-5">点击控制面板</span>
    <span className="absolute left-[832px] top-[103px] h-[26px] w-[86px] whitespace-nowrap border border-[#e0142c] leading-6">点击管理工具</span>
    <div className="absolute left-[181px] top-[137px] h-[35px] w-[162px] border-[3px] border-[#e80000]" />
    <div className="absolute left-[765px] top-[114px] h-16 w-[61px] border-[3px] border-[#e80000]" />
    <div className="absolute left-5 top-[396px] h-8 w-[63px] border-[3px] border-[#e80000]" />
  </div>
);

export default function App() {
  return (
    <main className="relative flex h-screen flex-col overflow-hidden bg-[#003f8f] font-['Liberation_Sans','Noto_Sans_CJK_SC',sans-serif]">
      <Defs />
      <div className="relative flex min-h-0 flex-1 overflow-hidden pr-1.5">
        <ControlPanel />
        <StartMenu />
      </div>
      <Taskbar />
      <Marks />
    </main>
  );
}
